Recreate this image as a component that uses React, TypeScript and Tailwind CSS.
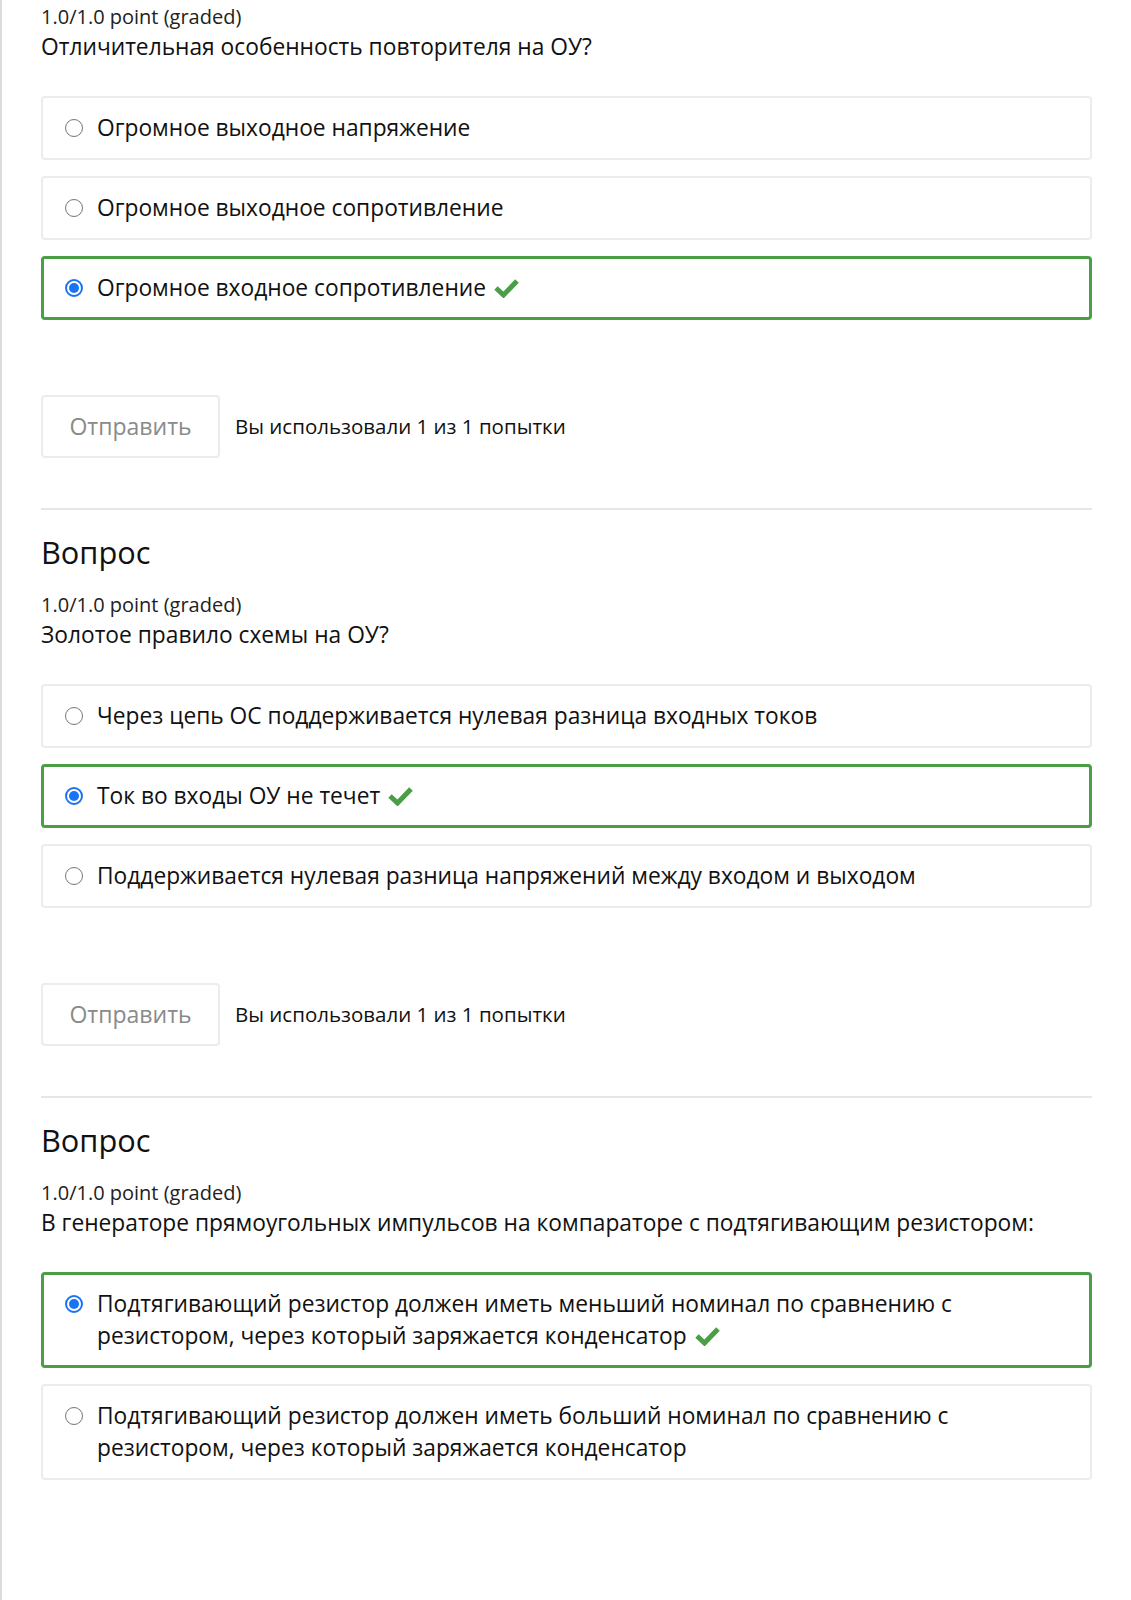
import React from "react";

type Opt = { text: string; selected?: boolean };

function Radio({ selected }: { selected?: boolean }) {
  if (selected) {
    return (
      <span className="mt-[7px] flex h-[18px] w-[18px] shrink-0 items-center justify-center rounded-full border-2 border-[#1a73f5] bg-white">
        <span className="h-[10px] w-[10px] rounded-full bg-[#1a73f5]" />
      </span>
    );
  }
  return <span className="mt-[7px] block h-[18px] w-[18px] shrink-0 rounded-full border border-[#777] bg-white" />;
}

function Check() {
  return (
    <svg className="ml-[8px] inline-block align-[-2px]" width="25" height="20" viewBox="0 0 25 20">
      <path d="M2 10 L9.5 17 L23 3" fill="none" stroke="#4a9e45" strokeWidth="5" strokeLinejoin="miter" />
    </svg>
  );
}

function Option({ text, selected }: Opt) {
  return (
    <div
      className={
        "flex items-start gap-[14px] rounded-[4px] bg-white pr-[20px] " +
        (selected ? "border-[3px] border-[#4a9e45] pl-[21px] py-[13px]" : "border-2 border-[#ececec] pl-[22px] py-[14px]")
      }
    >
      <Radio selected={selected} />
      <div className="text-[22.75px] leading-[32px] text-[#111]">
        {text}
        {selected && <Check />}
      </div>
    </div>
  );
}

function Submit() {
  return (
    <div className="mt-[75px] flex items-center gap-[15px]">
      <div className="flex h-[63px] w-[179px] items-center justify-center rounded-[4px] border-2 border-[#ececec] text-[23px] text-[#8a8a8a]">
        Отправить
      </div>
      <div className="text-[20.5px] text-[#111]">Вы использовали 1 из 1 попытки</div>
    </div>
  );
}

function Question({ q, options, heading }: { q: string; options: Opt[]; heading?: boolean }) {
  return (
    <div>
      {heading && <div className="mt-[22px] text-[30.75px] leading-[40px] text-[#111]">Вопрос</div>}
      <div className={(heading ? "mt-[21px] " : "") + "text-[20px] leading-[24px] text-[#222]"}>1.0/1.0 point (graded)</div>
      <div className="mt-[3px] text-[22.75px] leading-[30px] text-[#111]">{q}</div>
      <div className="mt-[34px] flex flex-col gap-[16px]">
        {options.map((o, i) => (
          <Option key={i} {...o} />
        ))}
      </div>
    </div>
  );
}

export default function App() {
  return (
    <div
      className="min-h-[1600px] border-l-2 border-[#dcdcdc] bg-white pl-[39px] pr-[39px] pt-[5px]"
      style={{ fontFamily: '"Open Sans", "Noto Sans", sans-serif' }}
    >
      <Question
        q="Отличительная особенность повторителя на ОУ?"
        options={[
          { text: "Огромное выходное напряжение" },
          { text: "Огромное выходное сопротивление" },
          { text: "Огромное входное сопротивление", selected: true },
        ]}
      />
      <Submit />
      <div className="mt-[50px] h-[2px] bg-[#e6e6e6]" />
      <Question
        heading
        q="Золотое правило схемы на ОУ?"
        options={[
          { text: "Через цепь ОС поддерживается нулевая разница входных токов" },
          { text: "Ток во входы ОУ не течет", selected: true },
          { text: "Поддерживается нулевая разница напряжений между входом и выходом" },
        ]}
      />
      <Submit />
      <div className="mt-[50px] h-[2px] bg-[#e6e6e6]" />
      <Question
        heading
        q="В генераторе прямоугольных импульсов на компараторе с подтягивающим резистором:"
        options={[
          {
            text: "Подтягивающий резистор должен иметь меньший номинал по сравнению с резистором, через который заряжается конденсатор",
            selected: true,
          },
          {
            text: "Подтягивающий резистор должен иметь больший номинал по сравнению с резистором, через который заряжается конденсатор",
          },
        ]}
      />
    </div>
  );
}
